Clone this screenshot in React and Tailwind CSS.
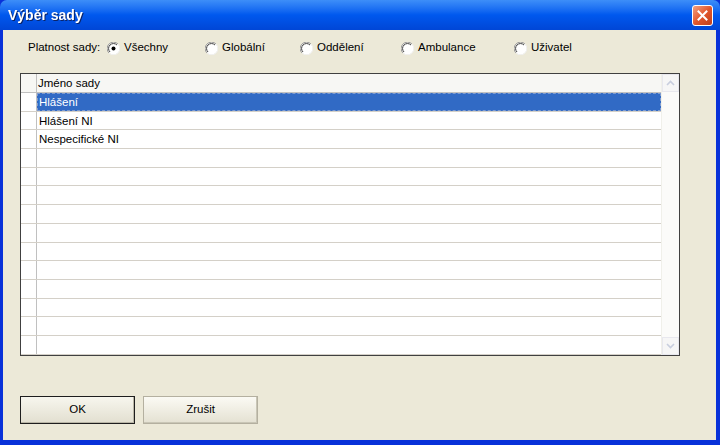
import React from 'react';

const options = ['Všechny', 'Globální', 'Oddělení', 'Ambulance', 'Uživatel'];
const optionWidths = ['w-[98px]', 'w-[95px]', 'w-[101px]', 'w-[113px]', 'w-[80px]'];
const rows = ['Hlášení', 'Hlášení NI', 'Nespecifické NI', '', '', '', '', '', '', '', '', '', '', ''];

const Radio = ({ checked }) => (
    <svg width="13" height="13" viewBox="0 0 13 13" className="shrink-0">
        <circle cx="6.5" cy="6.5" r="6" fill="#ffffff" />
        <path d="M11 2 A6 6 0 0 0 2 11" fill="none" stroke="#9a9a9a" strokeWidth="1" />
        <path d="M10 3 A4.9 4.9 0 0 0 3 10" fill="none" stroke="#404040" strokeWidth="1" />
        <path d="M2 11 A6 6 0 0 0 11 2" fill="none" stroke="#f0f0f0" strokeWidth="1" />
        {checked && <circle cx="6.5" cy="6.5" r="2" fill="#000000" />}
    </svg>
);

const Arrow = ({ up }) => (
    <svg width="9" height="6" viewBox="0 0 9 6">
        <path d={up ? 'M1 5 L4.5 1.5 L8 5' : 'M1 1 L4.5 4.5 L8 1'} fill="none" stroke="#c8cede" strokeWidth="1.6" />
    </svg>
);

const App = () => {
    return (
        <div className="w-[720px] h-[445px] flex flex-col bg-[#0831d9] text-[11.5px] text-black" style={{ fontFamily: '"Liberation Sans", Arial, sans-serif' }}>
            {/* titulek okna */}
            <div className="h-[30px] shrink-0 flex items-center justify-between pl-[8px] pr-[7px] rounded-t-[7px] bg-gradient-to-b from-[#3d8ef8] via-[#0058ee] to-[#0046d6]">
                <span className="text-white font-bold text-[14px] drop-shadow-[1px_1px_0_#0a246a]">Výběr sady</span>
                <div className="w-[21px] h-[21px] rounded-[3px] border border-white bg-gradient-to-br from-[#f0a080] via-[#e2572c] to-[#c0401b] flex items-center justify-center">
                    <svg width="11" height="11" viewBox="0 0 11 11">
                        <path d="M1.5 1.5 L9.5 9.5 M9.5 1.5 L1.5 9.5" stroke="#ffffff" strokeWidth="2" strokeLinecap="square" />
                    </svg>
                </div>
            </div>

            <div className="flex-1 flex flex-col ml-[3px] mr-[4px] mb-[5px] bg-[#ece9d8] pl-[17px] pr-[36px]">
                {/* platnost sady */}
                <div className="mt-[10px] h-[16px] flex items-center pl-[8px]">
                    <span className="w-[79px]">Platnost sady:</span>
                    {options.map((opt, i) => (
                        <div key={opt} className={`flex items-center gap-[4px] ${optionWidths[i]}`}>
                            <Radio checked={i === 0} />
                            <span>{opt}</span>
                        </div>
                    ))}
                </div>

                {/* tabulka sad */}
                <div className="mt-[17px] h-[283px] flex border border-[#404040] bg-white">
                    <div className="flex-1 flex flex-col">
                        <div className="h-[19px] flex border-b border-[#c0c0c0] bg-[#f7f7f4]">
                            <div className="w-[16px] border-r border-[#c0c0c0]" />
                            <div className="pl-[1px] leading-[19px]">Jméno sady</div>
                        </div>
                        {rows.map((name, i) => (
                            <div key={i} className="h-[18.7px] flex border-b border-[#d4d0c8]">
                                <div className="w-[16px] border-r border-[#c0c0c0]" />
                                {i === 0 ? (
                                    <div className="flex-1 bg-[#316ac5] text-white pl-[1px] leading-[16px] border border-dashed border-[#7f9cd0]">{name}</div>
                                ) : (
                                    <div className="flex-1 pl-[2px] leading-[18px]">{name}</div>
                                )}
                            </div>
                        ))}
                    </div>
                    <div className="w-[18px] flex flex-col justify-between bg-[#fbfbf9] border-l border-[#f0f0ea]">
                        <div className="h-[18px] flex items-center justify-center border border-[#e8e8ee] bg-[#f6f6f6]">
                            <Arrow up />
                        </div>
                        <div className="h-[18px] flex items-center justify-center border border-[#e8e8ee] bg-[#f6f6f6]">
                            <Arrow />
                        </div>
                    </div>
                </div>

                {/* tlačítka */}
                <div className="mt-[40px] flex gap-[8px]">
                    <button className="w-[115px] h-[28px] border border-[#1e1e1e] bg-gradient-to-b from-[#f7f6ee] to-[#e2dfd0] shadow-[inset_-1px_-1px_0_#b9b6a6]">OK</button>
                    <button className="w-[115px] h-[28px] border border-[#b4b0a0] bg-gradient-to-b from-[#fbfaf4] to-[#e4e1d2] shadow-[inset_-1px_-1px_0_#c9c6b6]">Zrušit</button>
                </div>
            </div>
        </div>
    );
};

export default App;
